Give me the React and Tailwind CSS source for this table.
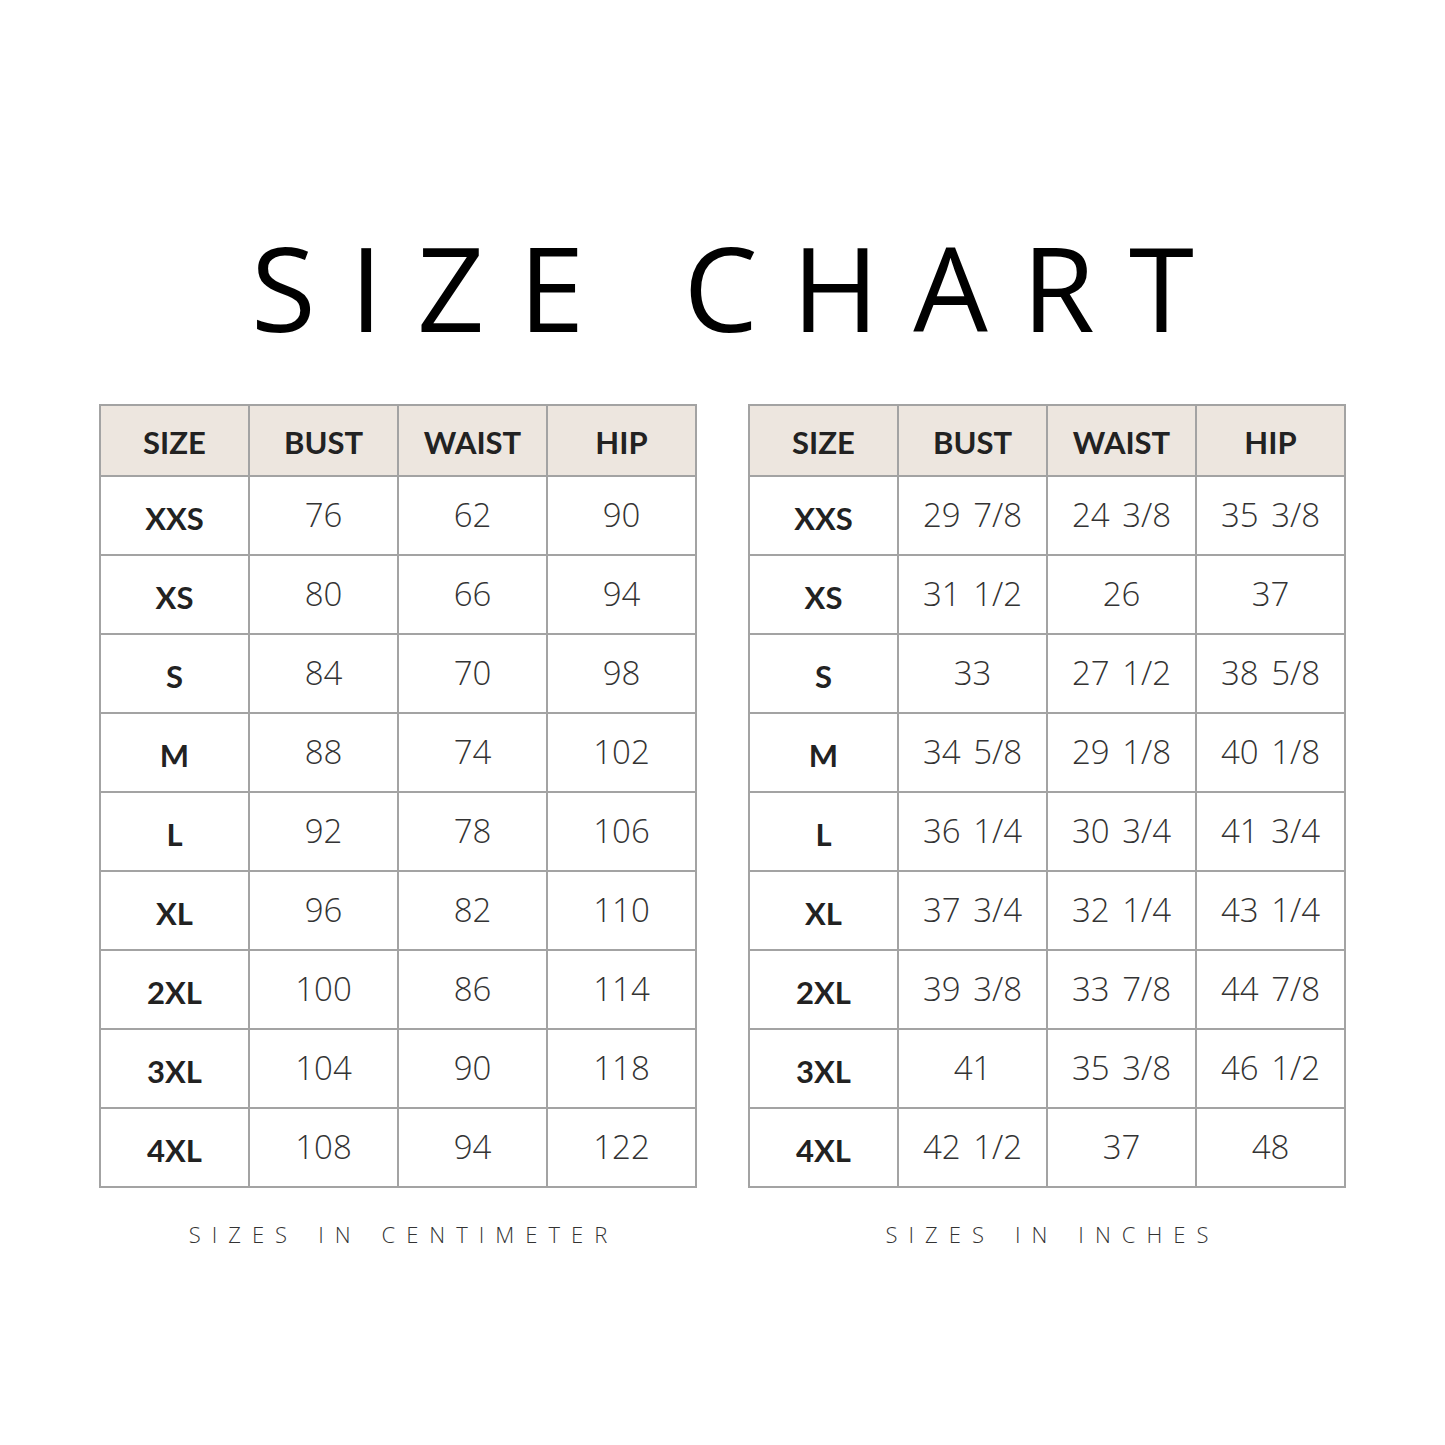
import React from "react";

const cm = [
  ["XXS", "76", "62", "90"],
  ["XS", "80", "66", "94"],
  ["S", "84", "70", "98"],
  ["M", "88", "74", "102"],
  ["L", "92", "78", "106"],
  ["XL", "96", "82", "110"],
  ["2XL", "100", "86", "114"],
  ["3XL", "104", "90", "118"],
  ["4XL", "108", "94", "122"],
];
const inch = [
  ["XXS", "29 7/8", "24 3/8", "35 3/8"],
  ["XS", "31 1/2", "26", "37"],
  ["S", "33", "27 1/2", "38 5/8"],
  ["M", "34 5/8", "29 1/8", "40 1/8"],
  ["L", "36 1/4", "30 3/4", "41 3/4"],
  ["XL", "37 3/4", "32 1/4", "43 1/4"],
  ["2XL", "39 3/8", "33 7/8", "44 7/8"],
  ["3XL", "41", "35 3/8", "46 1/2"],
  ["4XL", "42 1/2", "37", "48"],
];

function Chart({ rows, caption }) {
  return (
    <div className="flex flex-col items-center">
      <table className="w-[598px] table-fixed border-collapse border-2 border-[#a3a3a3]">
        <thead>
          <tr className="h-[71px] bg-[#ede6df]">
            {["SIZE", "BUST", "WAIST", "HIP"].map((h) => (
              <th
                key={h}
                className="border-2 border-[#a3a3a3] text-center text-[31px] font-bold text-[#222] [font-family:Lato,'Open_Sans',sans-serif] pt-[4px]"
              >
                {h}
              </th>
            ))}
          </tr>
        </thead>
        <tbody>
          {rows.map((r) => (
            <tr key={r[0]} className="h-[79px]">
              <td className="border-2 border-[#a3a3a3] text-center text-[31px] font-bold text-[#222] [font-family:Lato,'Open_Sans',sans-serif] pt-[6px]">
                {r[0]}
              </td>
              {r.slice(1).map((v, i) => (
                <td
                  key={i}
                  className="border-2 border-[#a3a3a3] text-center text-[33px] font-light text-[#333] [font-family:'Open_Sans',sans-serif] pb-[2px] [word-spacing:4px]"
                >
                  {v}
                </td>
              ))}
            </tr>
          ))}
        </tbody>
      </table>
      <div className="mt-[30px] text-[22px] font-light tracking-[0.5em] text-[#333] [font-family:'Open_Sans',sans-serif] [word-spacing:0.15em] pl-[0.5em]">
        {caption}
      </div>
    </div>
  );
}

export default function App() {
  return (
    <div className="w-[1445px] h-[1445px] bg-white flex flex-col items-center pt-[228px]">
      <h1 className="text-[118px] leading-none font-normal text-black tracking-[0.29em] pl-[0.29em] [font-family:'Open_Sans',sans-serif]">
        SIZE CHART
      </h1>
      <div className="mt-[58px] flex gap-[51px]">
        <Chart rows={cm} caption="SIZES IN CENTIMETER" />
        <Chart rows={inch} caption="SIZES IN INCHES" />
      </div>
    </div>
  );
}
